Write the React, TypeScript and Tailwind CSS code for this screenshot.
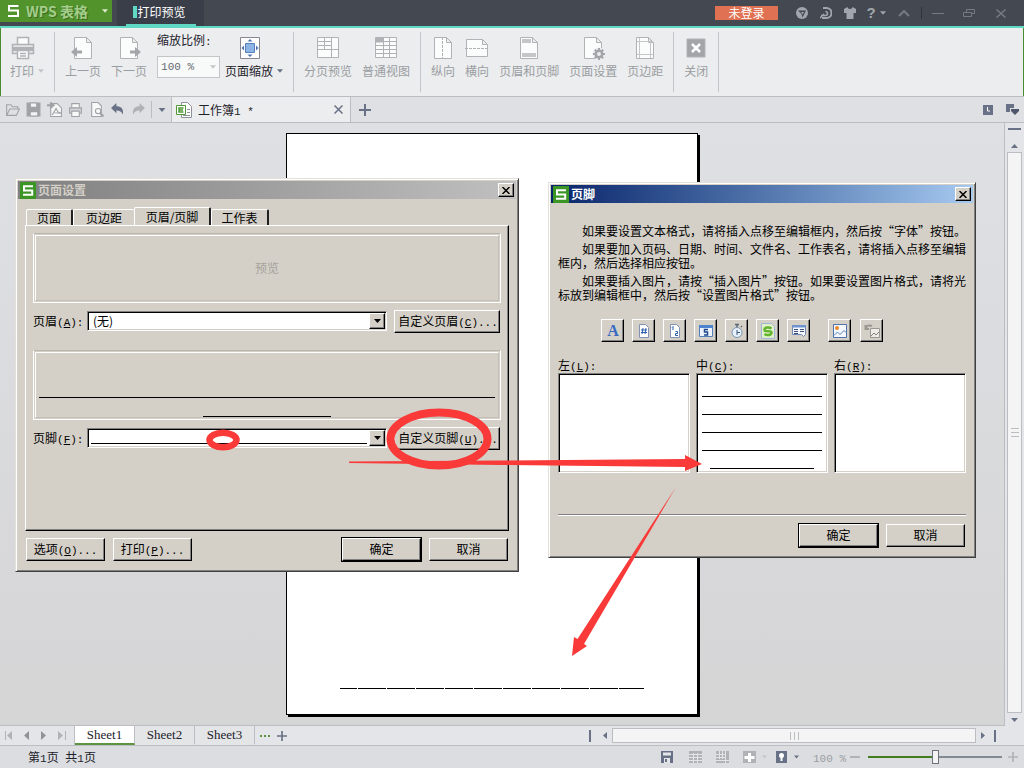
// ─── PrintPreviewWindow ───────────────────────────────────────────────────────
//
//  Spreadsheet print preview with the page setup and footer dialogs open.

import type { ReactNode } from 'react'

// ── Shared class strings ──────────────────────────────────────────────────────
const RAISED =
  'border border-t-white border-l-white border-r-black border-b-black bg-[#d4d0c8] shadow-[inset_-1px_-1px_0_#808080]'
const SUNKEN =
  'border border-t-[#808080] border-l-[#808080] border-r-white border-b-white bg-white shadow-[inset_1px_1px_0_#000,inset_-1px_-1px_0_#d4d0c8]'
const GRAY = '#b0b2b5'
const SLATE = '#687185'

// ── Small pieces ──────────────────────────────────────────────────────────────
function Mono({ children }: { children: ReactNode }) {
  return <span className="font-['Liberation_Mono',monospace] text-[11px] leading-none">{children}</span>
}

function Key({ k, tail = '' }: { k: string; tail?: string }) {
  return (
    <Mono>
      (<u>{k}</u>){tail}
    </Mono>
  )
}

function Caret({ color = SLATE, w = 7 }: { color?: string; w?: number }) {
  return (
    <svg width={w} height="4" viewBox="0 0 7 4" className="shrink-0">
      <path d="M0 0h7L3.500 4z" fill={color} />
    </svg>
  )
}

function Logo() {
  return (
    <svg width="16" height="17" viewBox="0 0 16 17" className="shrink-0">
      <rect width="16" height="17" fill="#3c9626" />
      <path d="M13 4.2H4v4.3h8.200v4.300H3" fill="none" stroke="#fff" strokeWidth="2" />
    </svg>
  )
}

function Plus({ color = SLATE, size = 12 }: { color?: string; size?: number }) {
  return (
    <svg width={size} height={size} viewBox="0 0 12 12" className="shrink-0">
      <path d="M6 0v12M0 6h12" stroke={color} strokeWidth="2" />
    </svg>
  )
}

// ── Ribbon ────────────────────────────────────────────────────────────────────
function RibbonItem({ label, icon, caret, active }: { label: string; icon: ReactNode; caret?: boolean; active?: boolean }) {
  return (
    <button type="button" className={`flex shrink-0 flex-col ${active ? 'text-[#1d222b]' : 'text-[#9a9da1]'}`}>
      <span className={`flex h-[31px] items-center justify-center self-stretch ${caret ? 'pr-2' : ''}`}>
        <svg width="24" height="24" viewBox="0 0 24 24" fill="none" stroke={GRAY} strokeWidth="1">
          {icon}
        </svg>
      </span>
      <span className="flex items-center gap-1 leading-4">
        {label}
        {caret && <Caret color={active ? SLATE : '#c3c5c8'} w={6} />}
      </span>
    </button>
  )
}

function Divider() {
  return <span className="h-15 w-px shrink-0 bg-[#c3c5c9]" />
}

const PORTRAIT = <path d="M3.500 1.500h12l5 5v16h-17zM15.500 1.500v5h5" fill="#fbfcfc" />

const ICONS = {
  print: (
    <>
      <path d="M6.500 9V1.500h11V9" fill="#fbfcfc" strokeWidth="1.500" />
      <path d="M1.500 8.500h21v9h-21z" fill="#e3e4e6" strokeWidth="1.500" />
      <path d="M2 11h20v4H2z" fill={GRAY} stroke="none" />
      <path d="M6.500 14.500h11v8h-11zM9 17.500h6M9 20h6" fill="#fbfcfc" strokeWidth="1.500" />
    </>
  ),
  prev: (
    <>
      {PORTRAIT}
      <path d="M0 16l6-5v3.500h5v3H6V21z" fill="#a3a5a8" stroke="none" />
    </>
  ),
  next: (
    <>
      {PORTRAIT}
      <path d="M24 16l-6-5v3.500h-5v3h5V21z" fill="#a3a5a8" stroke="none" />
    </>
  ),
  scale: (
    <>
      <path d="M2.500 1.500h19v21h-19z" fill="#fff" stroke="#8b8493" />
      <path d="M7.500 7.500h9v9h-9z" fill="#8eb4e6" stroke="#5580bd" />
      <path d="M12 3l2.500 2.500h-5zM12 21l2.500-2.500h-5zM3.500 12L6 9.500v5zM20.500 12L18 9.500v5z" fill="#4f74ad" stroke="none" />
    </>
  ),
  breaks: (
    <>
      <path d="M1.500 1.500h21v20h-21z" fill="#fbfcfc" />
      <path d="M15.500 1.500v20M1.500 13.500h21M8.500 1.500v12M1.500 5.500h14M1.500 9.500h14" />
    </>
  ),
  normal: (
    <>
      <path d="M1.500 1.500h21v20h-21z" fill="#fbfcfc" />
      <path d="M2 2h7v4H2z" fill={GRAY} />
      <path d="M1.500 5.500h21M1.500 9.500h21M1.500 13.500h21M1.500 17.500h21M9.500 1.500v20M15.500 1.500v20" />
    </>
  ),
  portrait: (
    <>
      {PORTRAIT}
      <path d="M11.500 1v22" strokeDasharray="3 1" />
    </>
  ),
  landscape: (
    <>
      <path d="M1.500 3.500h16l5 5v12h-21zM17.500 3.500v5h5" fill="#fbfcfc" />
      <path d="M0 12.500h24" strokeDasharray="3 1" />
    </>
  ),
  headfoot: (
    <>
      {PORTRAIT}
      <path d="M5 3h9v4H5zM5 17h14v4H5z" fill="#c4c6c8" stroke="none" />
    </>
  ),
  setup: (
    <>
      {PORTRAIT}
      <circle cx="18" cy="18" r="6.500" fill="#ecedef" stroke="none" />
      <circle cx="18" cy="18" r="3.200" strokeWidth="2.500" stroke="#a3a5a8" />
      <path d="M18 12v2.500M18 21.500V24M12 18h2.500M21.500 18H24M13.800 13.800l1.700 1.700M20.500 20.500l1.700 1.700M13.800 22.200l1.700-1.700M20.500 15.500l1.700-1.700" strokeWidth="2" stroke="#a3a5a8" />
    </>
  ),
  margins: (
    <>
      {PORTRAIT}
      <path d="M6.500 2v20M17.500 4v18M4 5.500h16M4 18.500h16" stroke="#c4c6c8" />
    </>
  ),
  close: (
    <>
      <path d="M3 3h18v18H3z" fill="#a3a5a8" />
      <path d="M8 8l8 8M16 8l-8 8" stroke="#fff" strokeWidth="2.500" />
    </>
  ),
}

function Ribbon() {
  return (
    <section className="flex h-17 shrink-0 gap-[10px] border-r border-l border-[#4b8b2f] bg-[#ecedef] pt-1 pl-[9px]">
      <RibbonItem label="打印" icon={ICONS.print} caret />
      <Divider />
      <RibbonItem label="上一页" icon={ICONS.prev} />
      <RibbonItem label="下一页" icon={ICONS.next} />
      <div className="flex gap-[5px]">
        <div className="flex flex-col">
          <label htmlFor="zoom" className="leading-4 text-[#1d222b]">
            缩放比例<Mono>:</Mono>
          </label>
          <div className="relative mt-2">
            <select
              id="zoom"
              className="h-[22px] w-[63px] appearance-none border border-[#c3c5c9] bg-[#f8f9f9] px-[3px] font-['Liberation_Mono',monospace] text-[11px] text-[#666a70]"
            >
              <option>100 %</option>
            </select>
            <span className="pointer-events-none absolute top-0 right-1 flex h-[22px] items-center">
              <Caret color="#c3c5c8" w={6} />
            </span>
          </div>
        </div>
        <RibbonItem label="页面缩放" icon={ICONS.scale} caret active />
      </div>
      <Divider />
      <RibbonItem label="分页预览" icon={ICONS.breaks} />
      <RibbonItem label="普通视图" icon={ICONS.normal} />
      <Divider />
      <RibbonItem label="纵向" icon={ICONS.portrait} />
      <RibbonItem label="横向" icon={ICONS.landscape} />
      <RibbonItem label="页眉和页脚" icon={ICONS.headfoot} />
      <RibbonItem label="页面设置" icon={ICONS.setup} />
      <RibbonItem label="页边距" icon={ICONS.margins} />
      <Divider />
      <RibbonItem label="关闭" icon={ICONS.close} />
      <Divider />
    </section>
  )
}

// ── Title bar ─────────────────────────────────────────────────────────────────
function TitleBar() {
  return (
    <header className="flex h-7 shrink-0 border-b-2 border-[#5fd9c4] bg-[#444951]">
      <button type="button" className="flex h-[22px] w-28 items-center bg-[#52942b] pr-1 pl-2">
        <svg width="11" height="12" viewBox="0 0 11 12" fill="none" stroke="#fff" strokeWidth="2">
          <path d="M10.500 1H1v4.500h9V11H0" />
        </svg>
        <span className="ml-[7px] flex-1 text-left text-[14px] font-bold whitespace-nowrap text-[#a5cd8c] [text-shadow:1px_1px_0_#3b6d1f]">
          WPS 表格
        </span>
        <Caret color="#d8ebcc" w={6} />
      </button>
      <div className="ml-[5px] flex w-[87px] justify-center bg-[#3a3e48]">
        <button type="button" className="flex w-[70px] items-center border-b-2 border-[#5fd9c4] pl-[7px] text-white">
          <span className="mr-px h-3 w-1 bg-[#5fd9c4]" />
          打印预览
        </button>
      </div>
      <div className="ml-auto flex items-center pr-[7px] text-[#a1a6ad]">
        <button type="button" className="mr-3 h-[14px] w-[63px] bg-[#e07152] leading-[14px] text-white">
          未登录
        </button>
        <button type="button" aria-label="skin" className="flex w-6 justify-center">
          <svg width="12" height="12" viewBox="0 0 12 12">
            <circle cx="6" cy="6" r="6" fill="#a1a6ad" />
            <path d="M2 3.500h8L6.500 10.500 5.500 7z" fill="#444951" />
            <path d="M5 5h3L6.500 7.500z" fill="#a1a6ad" />
          </svg>
        </button>
        <button type="button" aria-label="docer" className="flex w-6 justify-center">
          <svg width="12" height="12" viewBox="0 0 12 12" fill="none" stroke="#a1a6ad" strokeWidth="2">
            <path d="M3 1h3.500a4.500 4.500 0 0 1 0 10H2" />
            <path d="M1 8.500h4.500a2 2 0 0 0 0-4M0 11l4-4" strokeWidth="1.500" />
          </svg>
        </button>
        <button type="button" aria-label="theme" className="flex w-6 justify-center">
          <svg width="12" height="12" viewBox="0 0 12 12">
            <path d="M3.500 0a2.500 2 0 0 0 5 0L12 2v4H9.500v6h-7V6H0V2z" fill="#a1a6ad" />
          </svg>
        </button>
        <button type="button" aria-label="help" className="flex w-7 items-center justify-center gap-1 text-[15px] font-bold">
          <span className="font-['Liberation_Sans',sans-serif]">?</span>
          <Caret color="#a1a6ad" w={6} />
        </button>
        <button type="button" aria-label="collapse" className="mr-[3px] flex w-7 justify-center">
          <svg width="12" height="7" viewBox="0 0 12 7" fill="none" stroke="#767b83" strokeWidth="2">
            <path d="M1 6l5-5 5 5" />
          </svg>
        </button>
        <button type="button" aria-label="minimize" className="flex h-3 w-8 items-center justify-center border-l border-[#2f333a]">
          <span className="h-px w-3 bg-[#767b83]" />
        </button>
        <button type="button" aria-label="restore" className="flex w-8 justify-center">
          <svg width="12" height="8" viewBox="0 0 12 8" fill="none" stroke="#767b83">
            <path d="M3.500 3V.5h8v4H9M.5 3.500h8v4h-8z" />
          </svg>
        </button>
        <button type="button" aria-label="close" className="flex w-8 justify-center">
          <svg width="10" height="9" viewBox="0 0 10 9" stroke="#767b83" strokeWidth="1.500">
            <path d="M.5.5l9 8M9.500.5l-9 8" />
          </svg>
        </button>
      </div>
    </header>
  )
}

// ── Quick access and document tab ─────────────────────────────────────────────
const QUICK: { name: string; icon: ReactNode }[] = [
  { name: 'open', icon: <path d="M1.500 12.500v-10h4l1.500 2h5v2M1.500 12.500l3-6h9l-3 6z" /> },
  {
    name: 'save',
    icon: (
      <>
        <path d="M1 1h12v12H1z" fill="#a0a2a6" />
        <path d="M4 1h6v4H4zM4 9h7v4H4z" fill="#f2f3f4" />
      </>
    ),
  },
  {
    name: 'pdf',
    icon: (
      <>
        <path d="M3.500 1.500h6l4 4v8h-10z" fill="#f7f8f8" />
        <path d="M0 3h5M3 .5L6 3 3 5.500" strokeWidth="2" />
        <path d="M5 12l3.500-6L10 9l3 1.500-6-.5" />
      </>
    ),
  },
  {
    name: 'print',
    icon: (
      <>
        <path d="M3.500 5V1.500h7V5" fill="#f7f8f8" />
        <path d="M1.500 5.500h11v5h-11z" fill="#d0d2d5" />
        <path d="M3.500 8.500h7v5h-7z" fill="#f7f8f8" />
      </>
    ),
  },
  {
    name: 'preview',
    icon: (
      <>
        <path d="M2.500.5h6l3 3v10h-9z" fill="#f7f8f8" />
        <circle cx="8.500" cy="8.500" r="2.500" />
        <path d="M10.500 10.500l3 3" strokeWidth="2" />
      </>
    ),
  },
  { name: 'undo', icon: <path d="M1 5.500L6 1v3c4 0 7 2 6 8-1-3-3-4-6-4v2.500z" fill="#687185" stroke="none" /> },
  { name: 'redo', icon: <path d="M13 5.500L8 1v3C4 4 1 6 2 12c1-3 3-4 6-4v2.500z" fill="#b0b2b5" stroke="none" /> },
]

function DocumentBar() {
  return (
    <nav className="flex h-[27px] shrink-0 border-t border-b border-[#bbbdc3] bg-[#dfe0e4]">
      <div className="flex items-center pl-[2px]">
        {QUICK.map((q) => (
          <button key={q.name} type="button" aria-label={q.name} className="flex w-[21px] justify-center">
            <svg width="15" height="15" viewBox="0 0 14 14" fill="none" stroke="#a0a2a6">
              {q.icon}
            </svg>
          </button>
        ))}
      </div>
      <button type="button" aria-label="customize" className="my-1 ml-[2px] flex w-[20px] items-center justify-center border-l border-[#bbbdc3]">
        <Caret w={8} />
      </button>
      <div className="flex w-[180px] items-center border-r border-l border-[#bbbdc3] bg-[#ecedef] pr-[7px] pl-1">
        <svg width="16" height="16" viewBox="0 0 16 16" fill="none" stroke="#8f9399">
          <path d="M5.500.5h6l4 4v11h-10z" fill="#fff" />
          <path d="M11 7.500h3M11 10.500h3M7 13.500h7" />
          <path d="M.5 3.500h9v9h-9z" fill="#fff" stroke="#4f9b33" />
          <path d="M7.500 6H3v4h4.500M3 8h4" stroke="#4f9b33" strokeWidth="1.500" />
        </svg>
        <span className="ml-[6px] flex-1 text-[#1d222b]">
          工作簿<Mono>1 *</Mono>
        </span>
        <button type="button" aria-label="close tab">
          <svg width="9" height="9" viewBox="0 0 9 9" stroke={SLATE} strokeWidth="1.500">
            <path d="M.5.5l8 8M8.500.5l-8 8" />
          </svg>
        </button>
      </div>
      <button type="button" aria-label="new tab" className="ml-2 self-center">
        <Plus />
      </button>
      <div className="ml-auto flex items-center gap-[13px] pr-[5px]">
        <svg width="10" height="10" viewBox="0 0 10 10">
          <path d="M0 0h10v10H0z" fill={SLATE} />
          <path d="M4.500 2v4H7" fill="none" stroke="#fff" />
        </svg>
        <svg width="13" height="11" viewBox="0 0 13 11" fill={SLATE}>
          <path d="M0 0h8v4H4v4H0z" />
          <path d="M5 5h8v2L9 11 5 7z" fill="#4e566a" />
        </svg>
      </div>
    </nav>
  )
}

// ── Preview canvas ────────────────────────────────────────────────────────────
function PreviewArea() {
  return (
    <main className="flex min-h-0 flex-1 bg-[#e4e5e8]">
      <div className="flex flex-1 justify-center border-r border-b border-[#bbbdc3] bg-linear-to-b from-[#dfe0e4] to-[#d5d5d6] pt-[10px] pr-5 pb-[10px]">
        <div className="flex w-[412px] flex-col justify-end border border-black bg-white px-[53px] pb-[25px] shadow-[2px_2px_0_#000]">
          <div className="h-px bg-[repeating-linear-gradient(90deg,#000_0,#000_17px,#fff_17px,#fff_18px,#000_18px,#000_29px)]" />
        </div>
      </div>
      <div className="flex w-[19px] flex-col items-center pb-1">
        <span className="mt-[5px] h-[2px] w-[13px] bg-[#687185]" />
        <svg width="7" height="4" viewBox="0 0 7 4" className="mt-[14px]">
          <path d="M0 4h7L3.500 0z" fill={SLATE} />
        </svg>
        <div className="mt-1 flex w-[15px] flex-1 flex-col items-center justify-center gap-[3px] border border-[#bbbdc3] bg-[#f4f4f5]">
          <span className="h-px w-2 bg-[#bbbdc3]" />
          <span className="h-px w-2 bg-[#bbbdc3]" />
          <span className="h-px w-2 bg-[#bbbdc3]" />
        </div>
        <div className="mt-[5px]">
          <Caret />
        </div>
      </div>
    </main>
  )
}

// ── Sheet tabs and status bar ─────────────────────────────────────────────────
function SheetBar() {
  return (
    <nav className="flex h-5 shrink-0 items-stretch border-b border-[#bbbdc3] bg-[#e4e5e8]">
      <div className="flex w-[75px] items-center gap-[11px] border-r border-[#bbbdc3] pl-[5px]">
        <svg width="8" height="9" viewBox="0 0 8 9" fill={GRAY}>
          <path d="M0 0h1v9H0zM7 0v9L2 4.500z" />
        </svg>
        <svg width="6" height="9" viewBox="0 0 6 9" fill="#8f9399">
          <path d="M5 0v9L0 4.500z" />
        </svg>
        <svg width="6" height="9" viewBox="0 0 6 9" fill="#8f9399">
          <path d="M0 0v9l5-4.500z" />
        </svg>
        <svg width="8" height="9" viewBox="0 0 8 9" fill={GRAY}>
          <path d="M7 0h1v9H7zM0 0v9l5-4.500z" />
        </svg>
      </div>
      {['Sheet1', 'Sheet2', 'Sheet3'].map((name, i) => (
        <button
          key={name}
          type="button"
          className={[
            "w-15 border-r border-b-2 border-r-[#bbbdc3] pt-px font-['Liberation_Serif',serif] text-[13px] leading-4 text-[#1d222b]",
            i === 0 ? 'border-b-[#5c9440] bg-white' : 'border-b-transparent bg-[#e4e5e6]',
          ].join(' ')}
        >
          {name}
        </button>
      ))}
      <div className="flex items-center gap-[7px] pl-[5px]">
        <svg width="10" height="2" viewBox="0 0 10 2" fill="#5c9440">
          <path d="M0 0h2v2H0zM4 0h2v2H4zM8 0h2v2H8z" />
        </svg>
        <Plus size={10} />
      </div>
      <div className="ml-auto flex items-center pr-7">
        <span className="h-3 w-[2px] bg-[#687185]" />
        <svg width="4" height="7" viewBox="0 0 4 7" className="mr-[5px] ml-3" fill={SLATE}>
          <path d="M4 0v7L0 3.500z" />
        </svg>
        <div className="flex h-[15px] w-[364px] items-center justify-center gap-[3px] border border-[#bbbdc3] bg-[#f4f4f5]">
          <span className="h-2 w-px bg-[#bbbdc3]" />
          <span className="h-2 w-px bg-[#bbbdc3]" />
          <span className="h-2 w-px bg-[#bbbdc3]" />
        </div>
        <svg width="4" height="7" viewBox="0 0 4 7" className="mr-[9px] ml-[5px]" fill={SLATE}>
          <path d="M0 0v7l4-3.500z" />
        </svg>
        <span className="h-3 w-[2px] bg-[#687185]" />
      </div>
    </nav>
  )
}

function StatusBar() {
  return (
    <footer className="flex h-[22px] shrink-0 items-center bg-[#dcdde1] pr-[6px] pl-7 text-[#1d222b]">
      <span>
        第<Mono>1</Mono>页<Mono> </Mono>共<Mono>1</Mono>页
      </span>
      <svg width="12" height="12" viewBox="0 0 12 12" className="mr-4 ml-auto">
        <path d="M0 0h12v12H0z" fill={SLATE} />
        <path d="M2 1.500h8v3H2zM3 7h6v5H3z" fill="#e4e5e8" />
        <path d="M4 8h2v3H4z" fill={SLATE} />
      </svg>
      <svg width="13" height="12" viewBox="0 0 13 12" className="mr-[14px]">
        <path d="M0 0h13v12H0z" fill={GRAY} />
        <path d="M0 3.500h13M0 6.500h13M0 9.500h13M4.500 2v10M8.500 2v10" stroke="#e4e5e8" />
      </svg>
      <svg width="13" height="12" viewBox="0 0 13 12" className="mr-[14px]">
        <path d="M0 0h13v12H0z" fill={GRAY} />
        <path d="M0 3.500h10M0 6.500h10M3.500 0v8M6.500 0v8M9.500 0v12M0 9.500h13" stroke="#e4e5e8" />
      </svg>
      <svg width="13" height="12" viewBox="0 0 13 12" className="mr-[6px]">
        <path d="M0 0h13v12H0z" fill={GRAY} />
        <path d="M6.500 2v9M1.500 6.500h10" stroke="#fff" strokeWidth="3" />
      </svg>
      <Caret color="#c3c5c8" w={5} />
      <svg width="11" height="12" viewBox="0 0 11 12" className="mr-[7px] ml-[9px]">
        <path d="M0 0h11v12H0z" fill={SLATE} />
        <circle cx="5.500" cy="4.500" r="2.500" fill="#fff" />
        <path d="M4.500 6h2v4h-2z" fill="#fff" />
      </svg>
      <Caret w={5} />
      <label htmlFor="view-zoom" className="ml-[14px] text-[#9a9da1]">
        <Mono>100 %</Mono>
      </label>
      <button type="button" aria-label="zoom out" className="ml-1 h-[2px] w-[10px] bg-[#b0b2b5]" />
      <input
        id="view-zoom"
        type="range"
        defaultValue={50}
        className="mr-[6px] ml-2 h-[2px] w-[134px] appearance-none bg-linear-to-r from-[#427d20] from-50% to-[#828b94] to-50% [&::-webkit-slider-thumb]:h-[14px] [&::-webkit-slider-thumb]:w-[7px] [&::-webkit-slider-thumb]:appearance-none [&::-webkit-slider-thumb]:border [&::-webkit-slider-thumb]:border-[#6d737b] [&::-webkit-slider-thumb]:bg-[#f4f4f5]"
      />
      <Plus color={GRAY} size={10} />
    </footer>
  )
}

// ── Dialogs ───────────────────────────────────────────────────────────────────
interface DialogProps {
  title: string
  bar: string
  place: string
  children: ReactNode
}

function Dialog({ title, bar, place, children }: DialogProps) {
  return (
    <div
      role="dialog"
      aria-label={title}
      className={`absolute flex flex-col border border-t-[#e3e0da] border-l-[#e3e0da] border-r-[#404040] border-b-[#404040] bg-[#d4d0c8] p-[2px] text-black shadow-[inset_1px_1px_0_#fff,inset_-1px_-1px_0_#808080] ${place}`}
    >
      <div className={`flex h-[18px] shrink-0 items-center gap-[2px] px-[2px] font-bold ${bar}`}>
        <Logo />
        <span className="flex-1">{title}</span>
        <button type="button" aria-label="close" className={`flex h-[14px] w-4 items-center justify-center ${RAISED}`}>
          <svg width="8" height="7" viewBox="0 0 8 7" stroke="#000" strokeWidth="1.500">
            <path d="M.5 0l7 7M7.500 0l-7 7" />
          </svg>
        </button>
      </div>
      {children}
    </div>
  )
}

function PushButton({ children, isDefault }: { children: ReactNode; isDefault?: boolean }) {
  return (
    <button type="button" className={`h-[23px] w-[79px] pb-[2px] whitespace-nowrap ${RAISED} ${isDefault ? 'outline outline-black' : ''}`}>
      {children}
    </button>
  )
}

function PreviewBox({ children }: { children?: ReactNode }) {
  return (
    <div className="h-[70px] border border-white border-t-[#bab6ae] p-px">
      <div className="flex h-full flex-col items-center border border-t-white border-l-white border-r-[#c4c0b8] border-b-[#c4c0b8]">{children}</div>
    </div>
  )
}

function FieldRow({ id, label, k, value, line, button, bk }: { id: string; label: string; k: string; value: string; line?: boolean; button: string; bk: string }) {
  return (
    <div className="flex h-[23px] pr-px">
      <label htmlFor={id} className="w-[54px] leading-[22px] whitespace-nowrap">
        {label}
        <Key k={k} tail=":" />
      </label>
      <div className="relative mt-px h-5 flex-1">
        <select id={id} className={`block h-5 w-full appearance-none px-[5px] pb-px leading-4 ${SUNKEN}`}>
          <option>{value}</option>
        </select>
        {line && <span className="pointer-events-none absolute bottom-1 left-1 h-px w-[276px] bg-black" />}
        <span className={`pointer-events-none absolute top-[2px] right-[2px] flex h-4 w-4 items-center justify-center ${RAISED}`}>
          <Caret color="#000" />
        </span>
      </div>
      <button type="button" className={`ml-[7px] h-[23px] w-[106px] pb-px pl-[2px] whitespace-nowrap ${RAISED}`}>
        {button}
        <Key k={bk} tail="..." />
      </button>
    </div>
  )
}

const TABS = [
  { name: '页面', size: 'h-4 w-[47px]' },
  { name: '页边距', size: 'h-4 w-[61px]' },
  { name: '页眉/页脚', size: 'h-[19px] w-[77px] -mb-px bg-[#d4d0c8]' },
  { name: '工作表', size: 'h-4 w-[58px]' },
]

function PageSetupDialog() {
  return (
    <Dialog title="页面设置" bar="bg-linear-to-r from-[#808080] to-[#c0c0c0] text-[#d4d0c8]" place="top-[178px] left-[15px] h-[394px] w-[504px]">
      <div role="tablist" className="mt-2 ml-2 flex h-[18px] items-end">
        {TABS.map((tab, i) => (
          <button
            key={tab.name}
            type="button"
            role="tab"
            aria-selected={i === 2}
            className={`rounded-t-[2px] border-t border-l border-white leading-[14px] whitespace-nowrap ${
              i === 1 ? '' : 'border-r-2 border-r-[#202020]'
            } ${tab.size}`}
          >
            {tab.name}
          </button>
        ))}
      </div>
      <div className="mx-[7px] flex flex-1 flex-col border border-t-white border-l-white border-r-black border-b-black px-[7px] pt-[7px] shadow-[inset_-1px_-1px_0_#808080]">
        <PreviewBox>
          <span className="m-auto text-[#a5a29b]">预览</span>
        </PreviewBox>
        <div className="mt-[7px] mb-[17px]">
          <FieldRow id="header" label="页眉" k="A" value="(无)" button="自定义页眉" bk="C" />
        </div>
        <PreviewBox>
          <span className="mt-11 h-px w-[456px] bg-black" />
          <span className="mt-[18px] h-px w-32 bg-black" />
        </PreviewBox>
        <div className="mt-[7px]">
          <FieldRow id="footer" label="页脚" k="F" value="" line button="自定义页脚" bk="U" />
        </div>
      </div>
      <div className="mt-[7px] mb-2 flex gap-2 px-2">
        <PushButton>
          选项
          <Key k="O" tail="..." />
        </PushButton>
        <PushButton>
          打印
          <Key k="P" tail="..." />
        </PushButton>
        <div className="ml-auto flex gap-2">
          <PushButton isDefault>确定</PushButton>
          <PushButton>取消</PushButton>
        </div>
      </div>
    </Dialog>
  )
}

const SHEET = <path d="M3.500 1.500h6l3 3v10h-9z" fill="#fff" stroke="#8292b5" />

const FOOTER_TOOLS: { name: string; gap: string; icon: ReactNode }[] = [
  {
    name: 'font',
    gap: '',
    icon: (
      <text x="8" y="13" textAnchor="middle" fontFamily="Liberation Serif, serif" fontWeight="700" fontSize="16" fill="#3869c4">
        A
      </text>
    ),
  },
  {
    name: 'page number',
    gap: 'ml-2',
    icon: (
      <>
        {SHEET}
        <path d="M7 5L6 11M10 5l-1 6M5 7h6M5 9.500h6" stroke="#2c5fae" />
      </>
    ),
  },
  {
    name: 'page count',
    gap: 'ml-2',
    icon: (
      <>
        {SHEET}
        <path d="M5 4.500l1-1V7M8.500 8.500h2v2h-2v2h2.500" stroke="#2c5fae" fill="none" />
      </>
    ),
  },
  {
    name: 'date',
    gap: 'ml-2',
    icon: (
      <>
        <path d="M1.500 2.500h13v11h-13z" fill="#eef4fd" stroke="#5580bd" />
        <path d="M1 2h14v3H1z" fill="#4f83cf" />
        <path d="M10 6.500H6.500V9h3v3H6" stroke="#24488c" strokeWidth="1.500" fill="none" />
      </>
    ),
  },
  {
    name: 'time',
    gap: 'ml-2',
    icon: (
      <>
        <path d="M6 1.500h4M8 1v3M12 3l1 1" stroke="#5c6470" strokeWidth="1.500" />
        <circle cx="8" cy="9.500" r="5" fill="#e6f1fb" stroke="#7a93ad" />
        <path d="M8 7v5M8 9.500h3" stroke="#3a5878" />
      </>
    ),
  },
  {
    name: 'file name',
    gap: 'ml-2',
    icon: (
      <>
        <path d="M1.500.5h10l3 3v12h-13z" fill="#dff0c8" stroke="#9db7d5" />
        <path d="M11.500 5.500c-3-2-7-1-7 1.500s7 0 7 2.500-4 3.500-7 1.500" stroke="#62b32e" strokeWidth="2.500" fill="none" />
      </>
    ),
  },
  {
    name: 'sheet name',
    gap: 'ml-2',
    icon: (
      <>
        <path d="M1.500 2.500h13v9l-2 2-2-2H1.500z" fill="#f4f8fe" stroke="#6f87b0" />
        <path d="M1 2h14v2.500H1z" fill="#6f93cf" />
        <path d="M3 6.500h4M9 6.500h4M3 8.500h4M9 8.500h4M3 10.500h4" stroke="#3b4f78" />
      </>
    ),
  },
  {
    name: 'insert picture',
    gap: 'ml-[18px]',
    icon: (
      <>
        <path d="M1.500 1.500h13v13h-13z" fill="#f4f8fe" stroke="#4f74ad" />
        <circle cx="5" cy="5" r="2" fill="#e88a2c" />
        <path d="M2 12.500l3.500-3.500 2.500 2.500L12 7.500l2 2" fill="none" stroke="#5580bd" />
      </>
    ),
  },
  {
    name: 'picture format',
    gap: 'ml-[9px]',
    icon: (
      <>
        <path d="M6.500 5.500h9v9h-9z" fill="#ecebe7" stroke="#9b9891" />
        <path d="M7 13l3-3 2 2 3-3" stroke="#85827b" fill="none" />
        <path d="M1.500 2v4H5M2 5c1-3 4-3 6-2" stroke="#9b9891" strokeWidth="2" fill="none" />
      </>
    ),
  },
]

const SECTIONS = [
  { id: 'left', label: '左', k: 'L', lines: false },
  { id: 'center', label: '中', k: 'C', lines: true },
  { id: 'right', label: '右', k: 'R', lines: false },
]

function FooterDialog() {
  return (
    <Dialog title="页脚" bar="bg-linear-to-r from-[#0a246a] to-[#a6caf0] text-white" place="top-[182px] left-[548px] h-[376px] w-[428px]">
      <div className="flex flex-1 flex-col px-[7px] pt-[21px]">
        <div className="-mr-1 flex flex-col gap-1 indent-6 leading-[14px]">
          <p>如果要设置文本格式，请将插入点移至编辑框内，然后按“字体”按钮。</p>
          <p>如果要加入页码、日期、时间、文件名、工作表名，请将插入点移至编辑框内，然后选择相应按钮。</p>
          <p>如果要插入图片，请按“插入图片”按钮。如果要设置图片格式，请将光标放到编辑框中，然后按“设置图片格式”按钮。</p>
        </div>
        <div className="mt-[17px] flex pl-[43px]">
          {FOOTER_TOOLS.map((tool) => (
            <button key={tool.name} type="button" aria-label={tool.name} className={`flex h-[23px] w-[23px] items-center justify-center ${RAISED} ${tool.gap}`}>
              <svg width="16" height="16" viewBox="0 0 16 16" className="shrink-0">
                {tool.icon}
              </svg>
            </button>
          ))}
        </div>
        <div className="mt-[15px] grid grid-cols-3 gap-[6px]">
          {SECTIONS.map((s) => (
            <div key={s.id} className="relative flex flex-col">
              <label htmlFor={s.id} className="leading-4">
                {s.label}
                <Key k={s.k} tail=":" />
              </label>
              <textarea id={s.id} className={`h-25 resize-none p-1 ${SUNKEN}`} />
              {s.lines && (
                <div className="pointer-events-none absolute inset-x-[6px] bottom-1 flex flex-col items-center gap-[17px]">
                  <span className="h-px w-full bg-black" />
                  <span className="h-px w-full bg-black" />
                  <span className="h-px w-full bg-black" />
                  <span className="h-px w-full bg-black" />
                  <span className="h-px w-26 bg-black" />
                </div>
              )}
            </div>
          ))}
        </div>
        <hr className="mt-auto border-t border-b border-t-[#808080] border-b-white" />
        <div className="mt-2 mb-2 flex justify-end gap-2 pr-px">
          <PushButton isDefault>确定</PushButton>
          <PushButton>取消</PushButton>
        </div>
      </div>
    </Dialog>
  )
}

// ── Red pen marks ─────────────────────────────────────────────────────────────
function Markup() {
  return (
    <svg className="pointer-events-none absolute top-0 left-0" width="1024" height="768" viewBox="0 0 1024 768" fill="#f93a38">
      <ellipse cx="223" cy="440" rx="13.500" ry="7.300" fill="none" stroke="#f93a38" strokeWidth="6.500" />
      <ellipse cx="439" cy="439" rx="48.500" ry="26.500" fill="none" stroke="#f93a38" strokeWidth="8" />
      <path d="M349 461.500L500 460.500 685 459v-4l17 9-17 7v-4L500 465 349 463z" />
      <path d="M676 487L584 644l3 2-15 10 2-19 3.500 2z" />
    </svg>
  )
}

export default function App() {
  return (
    <div
      lang="zh-CN"
      className="relative flex h-screen flex-col overflow-hidden font-['Noto_Sans_CJK_SC',sans-serif] text-[12px] leading-4"
    >
      <TitleBar />
      <Ribbon />
      <DocumentBar />
      <PreviewArea />
      <SheetBar />
      <StatusBar />
      <PageSetupDialog />
      <FooterDialog />
      <Markup />
    </div>
  )
}
